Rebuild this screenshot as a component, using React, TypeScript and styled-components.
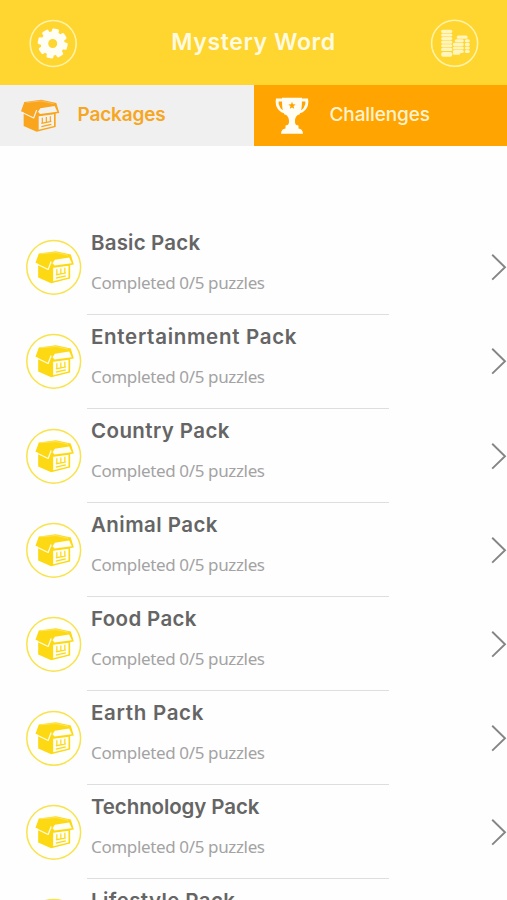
import React from "react";
import styled, { createGlobalStyle } from "styled-components";

const GlobalStyle = createGlobalStyle`
  * { box-sizing: border-box; }
  html, body { margin: 0; padding: 0; background: #fefefe; overflow: hidden; }
`;

const Screen = styled.div`
  width: 507px;
  height: 900px;
  overflow: hidden;
  display: flex;
  flex-direction: column;
  background: #fefefe;
  font-family: Inter, "Noto Sans", sans-serif;
`;

const Header = styled.header`
  flex: none;
  height: 85px;
  padding: 2px 28px 0;
  display: flex;
  align-items: center;
  justify-content: space-between;
  background: #ffd530;
`;

const HeaderButton = styled.button`
  width: 50px;
  height: 50px;
  padding: 0;
  border: 0;
  background: none;
  svg { display: block; }
`;

const Heading = styled.h1`
  margin: 0 0 3px;
  font-size: 23px;
  line-height: 30px;
  font-weight: 600;
  letter-spacing: 0.6px;
  white-space: nowrap;
  color: #fffbe0;
`;

const Tabs = styled.nav`
  flex: none;
  height: 61px;
  display: grid;
  grid-template-columns: 254px 253px;
`;

const Tab = styled.div<{ $active?: boolean }>`
  display: flex;
  align-items: center;
  padding-left: ${(p) => (p.$active ? 20 : 21)}px;
  background: ${(p) => (p.$active ? "#f0f0f0" : "#ffa400")};
  color: ${(p) => (p.$active ? "#f7a621" : "#fff3cf")};
`;

const TabIcon = styled.span<{ $width: number }>`
  flex: none;
  width: ${(p) => p.$width}px;
  svg { display: block; }
`;

const TabLabel = styled.span<{ $weight: number; $spacing: number }>`
  font-size: 19px;
  line-height: 24px;
  font-weight: ${(p) => p.$weight};
  letter-spacing: ${(p) => p.$spacing}px;
  padding-bottom: 2px;
`;

const List = styled.ul`
  margin: 0;
  padding: 74.5px 0 0;
  list-style: none;
`;

const Row = styled.li`
  height: 94.15px;
  display: grid;
  grid-template-columns: 87px 302px 1fr;
`;

const Badge = styled.div`
  padding: 18.8px 0 0 25px;
  svg { display: block; }
`;

const Details = styled.div`
  padding: 9px 0 0 4px;
  border-bottom: 1px solid #dedede;
`;

const Name = styled.h2<{ $spacing: number }>`
  margin: 0;
  height: 25px;
  font-size: 20.5px;
  line-height: 25px;
  font-weight: 600;
  letter-spacing: ${(p) => p.$spacing}px;
  white-space: nowrap;
  color: #656565;
`;

const Progress = styled.p`
  margin: 16px 0 0;
  font-family: "Noto Sans", sans-serif;
  font-size: 17px;
  line-height: 24px;
  letter-spacing: -0.36px;
  color: #a3a3a3;
`;

const Arrow = styled.div`
  display: flex;
  justify-content: flex-end;
  padding-top: 32.8px;
  svg { display: block; }
`;

function Crate({ color, paper }: { color: string; paper: string }) {
  return (
    <g strokeLinejoin="round">
      <path d="M11 36 L11 81 L50 98 L107 84 L107 42 L52 40 Z" fill={color} />
      <path d="M56 52 L102 46 L102 81 L56 92 Z" fill={paper} />
      <path d="M13 9 L64 2 L109 12 L118 42 L58 50 L51 38 L42 54 L3 37 Z" fill={color} />
      <path d="M61 28 L104 21 L112 38 L60 45 L54 38 Z" fill={paper} />
      <path d="M19 10 L64 6 L101 14" fill="none" stroke={paper} strokeWidth="1.6" opacity="0.6" />
      <path d="M5 40 L41 57 L50 33" fill="none" stroke={paper} strokeWidth="3.5" />
      <path
        d="M67 56 V73 M79 54 V71 M91 52 V68 M64 73 L94 67 M64 83 L94 76"
        fill="none"
        stroke={color}
        strokeWidth="3.6"
      />
    </g>
  );
}

function GearIcon() {
  return (
    <svg width="50" height="50" viewBox="0 0 50 50">
      <circle cx="25.2" cy="24.5" r="23" fill="none" stroke="#fff3a8" strokeWidth="1.6" />
      <g fill="#fffef4">
        {[12, 57, 102, 147, 192, 237, 282, 327].map((angle) => (
          <rect key={angle} x="21.2" y="9.6" width="7" height="9" rx="1.5" transform={`rotate(${angle} 24.7 24.5)`} />
        ))}
      </g>
      <circle cx="24.7" cy="24.5" r="8.2" fill="none" stroke="#fffef4" strokeWidth="7.4" />
    </svg>
  );
}

function CoinsIcon() {
  const stacks = [
    { x: 13.3, width: 11.2, ys: [10.8, 14.4, 18, 21.6, 25.2, 28.8] },
    { x: 29, width: 10.8, ys: [16.6] },
    { x: 27, width: 9, ys: [20.2] },
    { x: 37, width: 5, ys: [20.2, 23.8, 27.4, 31] },
    { x: 25, width: 11, ys: [23.8, 27.4, 31] },
  ];
  return (
    <svg width="50" height="50" viewBox="0 0 50 50">
      <circle cx="25.6" cy="24.3" r="23" fill="none" stroke="#fff3a8" strokeWidth="1.6" />
      <g fill="#fff5bd" transform="translate(-1.2 0)">
        {stacks.flatMap((s) =>
          s.ys.map((y) => <rect key={`${s.x}-${y}`} x={s.x} y={y} width={s.width} height="3.1" rx="1.5" />)
        )}
        <rect x="13.3" y="32.9" width="11.2" height="4.8" rx="2.3" />
        <rect x="25" y="33" width="7.5" height="2.8" rx="1.4" />
      </g>
    </svg>
  );
}

function TrophyIcon() {
  return (
    <svg width="34" height="38" viewBox="0 0 34 38">
      <path
        d="M9 3 H2.2 C1.3 9.5 5 15 12 15.5 M25 3 H31.8 C32.7 9.5 29 15 22 15.5"
        fill="none"
        stroke="#fffdf4"
        strokeWidth="2.8"
      />
      <path
        d="M7 .8 H27 C27 8 27 13 24.5 17.5 C22 17.5 20 20.5 20 24 C20 27 20.5 28 23.5 28.5 V31.5 C26.3 32 28 33.5 28 36.8 H6 C6 33.5 7.7 32 10.5 31.5 V28.5 C13.5 28 14 27 14 24 C14 20.5 12 17.5 9.5 17.5 C7 13 7 8 7 .8 Z"
        fill="#fffdf4"
      />
      <path
        d="M17 4.8 L18 7.3 L20.6 7.5 L18.6 9.2 L19.2 11.8 L17 10.4 L14.8 11.8 L15.4 9.2 L13.4 7.5 L16 7.3 Z"
        fill="#ffa400"
      />
    </svg>
  );
}

const packs = [
  { name: "Basic Pack", spacing: 0.18 },
  { name: "Entertainment Pack", spacing: 0.7 },
  { name: "Country Pack", spacing: 0.4 },
  { name: "Animal Pack", spacing: 0.45 },
  { name: "Food Pack", spacing: 0.35 },
  { name: "Earth Pack", spacing: 0.7 },
  { name: "Technology Pack", spacing: -0.1 },
  { name: "Lifestyle Pack", spacing: 0.4 },
];

export default function App() {
  return (
    <>
      <GlobalStyle />
      <Screen>
        <Header>
          <HeaderButton aria-label="Settings"><GearIcon /></HeaderButton>
          <Heading>Mystery Word</Heading>
          <HeaderButton aria-label="Coins"><CoinsIcon /></HeaderButton>
        </Header>
        <Tabs>
          <Tab $active>
            <TabIcon $width={57.5}>
              <svg width="40" height="34" viewBox="0 0 120 102"><Crate color="#f9a51d" paper="#f4f2ee" /></svg>
            </TabIcon>
            <TabLabel $weight={600} $spacing={-0.15}>Packages</TabLabel>
          </Tab>
          <Tab>
            <TabIcon $width={54.5}><TrophyIcon /></TabIcon>
            <TabLabel $weight={500} $spacing={-0.1}>Challenges</TabLabel>
          </Tab>
        </Tabs>
        <List>
          {packs.map((pack) => (
            <Row key={pack.name}>
              <Badge>
                <svg width="57" height="57" viewBox="0 0 57 57">
                  <circle cx="28.7" cy="28.3" r="26.9" fill="#fffffb" stroke="#f8e34e" strokeWidth="1.5" />
                  <svg x="9.5" y="11.5" width="40" height="34" viewBox="0 0 120 102">
                    <Crate color="#fdd914" paper="#fffef2" />
                  </svg>
                </svg>
              </Badge>
              <Details>
                <Name $spacing={pack.spacing}>{pack.name}</Name>
                <Progress>Completed 0/5 puzzles</Progress>
              </Details>
              <Arrow>
                <svg width="16" height="28" viewBox="0 0 16 28">
                  <path d="M1.2 1.8 L14 14.2 L1.2 26.6" fill="none" stroke="#858585" strokeWidth="1.9" />
                </svg>
              </Arrow>
            </Row>
          ))}
        </List>
      </Screen>
    </>
  );
}
